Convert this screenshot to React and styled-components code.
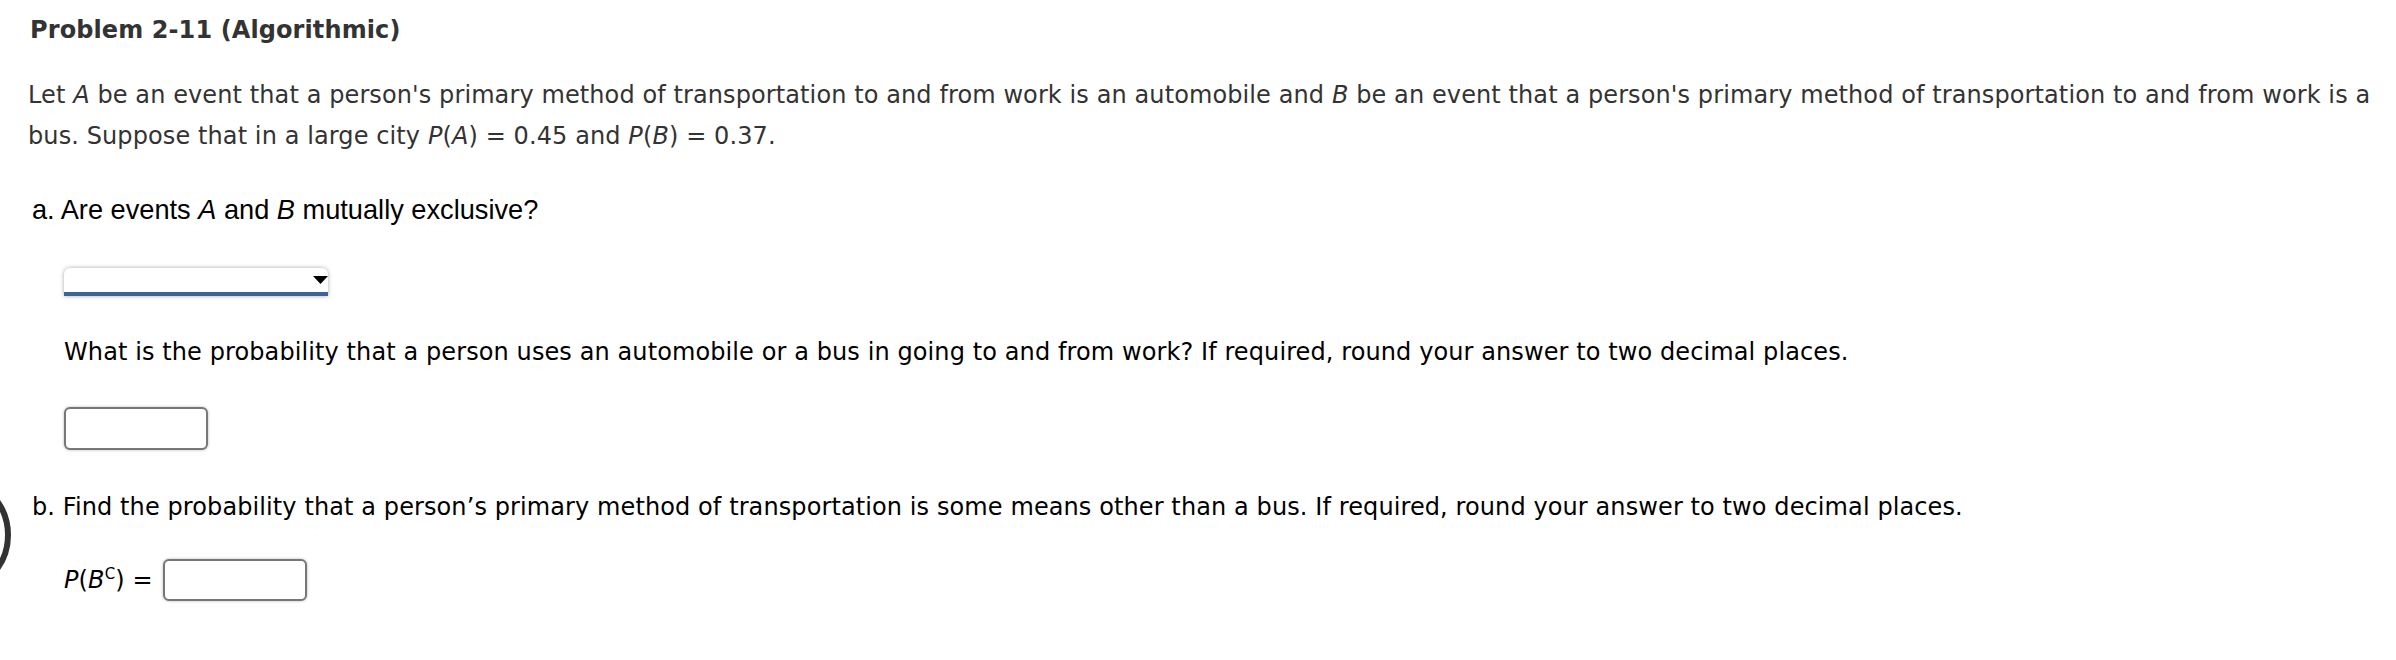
import React from "react";
import styled, { createGlobalStyle } from "styled-components";

const GlobalStyle = createGlobalStyle`
  body {
    margin: 0;
    background: #fff;
  }
`;

const Page = styled.div`
  position: relative;
  padding: 15px 16px 40px 28px;
  font-family: "DejaVu Sans", Verdana, sans-serif;
  font-size: 24px;
  letter-spacing: 0.1px;
  color: #000;
`;

const Title = styled.h2`
  margin: 0 0 0 2px;
  font-weight: bold;
  font-size: 24px;
  letter-spacing: 0.1px;
  line-height: 30px;
  color: #333;
`;

const Intro = styled.p`
  margin: 30px 0 0 0;
  line-height: 41px;
  color: #333;
`;

const PartLabel = styled.div`
  margin-top: ${(p) => p.$top || 32}px;
  margin-left: 4px;
  line-height: 41px;
  font-family: ${(p) => (p.$arial ? '"Liberation Sans", Arial, sans-serif' : "inherit")};
  font-size: ${(p) => (p.$arial ? "27.2px" : "inherit")};
  letter-spacing: ${(p) => (p.$arial ? "0" : "inherit")};
`;

const Indent = styled.div`
  padding-left: 36px;
`;

const Select = styled.div`
  margin-top: 38px;
  width: 264px;
  height: 24px;
  display: flex;
  align-items: center;
  justify-content: flex-end;
  background: #fff;
  border-radius: 6px 6px 0 0;
  border-bottom: 4px solid #3b6592;
  box-shadow: 0 0 4px rgba(0, 0, 0, 0.35);
  svg {
    display: block;
  }
`;

const Question = styled.div`
  margin-top: 36px;
  line-height: 41px;
`;

const Box = styled.div`
  box-sizing: border-box;
  width: ${(p) => p.$w || 144}px;
  height: ${(p) => p.$h || 43}px;
  border: 2px solid #777;
  border-radius: 6px;
  background: #fff;
  box-shadow: 0 0 3px rgba(0, 0, 0, 0.3);
`;

const AnswerRow = styled.div`
  margin-top: ${(p) => p.$top || 34}px;
  display: flex;
  align-items: center;
  gap: 10px;
`;

const Expr = styled.span`
  white-space: nowrap;
  i {
    font-style: italic;
  }
  sup {
    font-size: 15px;
    vertical-align: 9px;
    line-height: 0;
  }
`;

const EdgeRing = styled.svg`
  position: absolute;
  left: 0;
  top: 495px;
`;

export default function App() {
  return (
    <>
      <GlobalStyle />
      <Page>
        <Title>Problem 2-11 (Algorithmic)</Title>
        <Intro>
          Let <i>A</i> be an event that a person's primary method of transportation to and from work is an
          automobile and <i>B</i> be an event that a person's primary method of transportation to and from work
          is a bus. Suppose that in a large city <i>P</i>(<i>A</i>) = 0.45 and <i>P</i>(<i>B</i>) = 0.37.
        </Intro>

        <PartLabel $arial $top={32}>
          a. Are events <i>A</i> and <i>B</i> mutually exclusive?
        </PartLabel>
        <Indent>
          <Select>
            <svg width="15" height="8" viewBox="0 0 15 8">
              <path d="M0 0 H15 L7.5 8 Z" fill="#000" />
            </svg>
          </Select>
          <Question>
            What is the probability that a person uses an automobile or a bus in going to and from work? If
            required, round your answer to two decimal places.
          </Question>
          <AnswerRow $top={34}>
            <Box />
          </AnswerRow>
        </Indent>

        <PartLabel $top={37}>
          b. Find the probability that a person’s primary method of transportation is some means other than a
          bus. If required, round your answer to two decimal places.
        </PartLabel>
        <Indent>
          <AnswerRow $top={31}>
            <Expr>
              <i>P</i>(<i>B</i>
              <sup>C</sup>) =
            </Expr>
            <Box $w={144} $h={42} />
          </AnswerRow>
        </Indent>

        <EdgeRing width="16" height="80" viewBox="0 0 16 80">
          <circle cx="-50" cy="40" r="58" fill="none" stroke="#333" strokeWidth="6" />
        </EdgeRing>
      </Page>
    </>
  );
}
